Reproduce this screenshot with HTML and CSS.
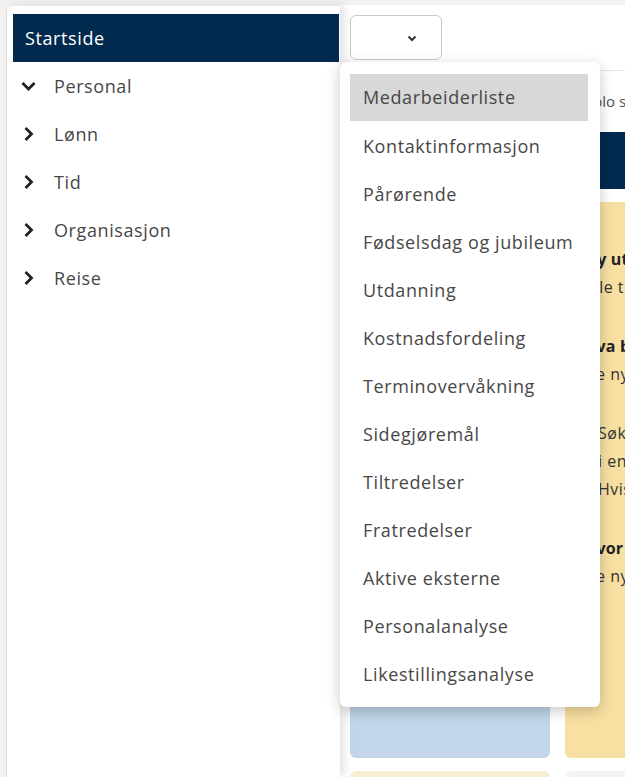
FILE: index.html
```
<!DOCTYPE html>
<html lang="no">
<head>
    <meta charset="utf-8"/>
    <title>Startside</title>
    <link rel="stylesheet" href="styles.css">
</head>
<body>
    <div class="app">
        <aside class="sidebar">
            <div class="home">Startside</div>
            <ul class="nav">
                <li class="nav-item">
                    <svg class="chev" viewBox="0 0 16 16"><path d="M1.5 5 L7.5 11 L13.5 5"/></svg>
                    <span>Personal</span>
                </li>
                <li class="nav-item">
                    <svg class="chev" viewBox="0 0 16 16"><path d="M4.5 2 L10.5 8 L4.5 14"/></svg>
                    <span>Lønn</span>
                </li>
                <li class="nav-item">
                    <svg class="chev" viewBox="0 0 16 16"><path d="M4.5 2 L10.5 8 L4.5 14"/></svg>
                    <span>Tid</span>
                </li>
                <li class="nav-item">
                    <svg class="chev" viewBox="0 0 16 16"><path d="M4.5 2 L10.5 8 L4.5 14"/></svg>
                    <span>Organisasjon</span>
                </li>
                <li class="nav-item">
                    <svg class="chev" viewBox="0 0 16 16"><path d="M4.5 2 L10.5 8 L4.5 14"/></svg>
                    <span>Reise</span>
                </li>
            </ul>
        </aside>
        <main class="main">
            <div class="toolbar">
                <button class="select">
                    <svg viewBox="0 0 12 12"><path d="M2.5 4.5 L6 8 L9.5 4.5"/></svg>
                </button>
            </div>
            <p class="info">Velg en rapport i menyen, eller et solo søk etter ansatte</p>
            <div class="banner"></div>
            <div class="cards">
                <div class="card blue">
                    <div class="big">Rapporter</div>
                </div>
                <div class="card yellow">
                    <p><b>Ny utgave av rapportene</b><br>Alle tilganger er overført</p>
                    <p><b>Hva betyr dette for deg</b><br>De nye rapportene ligger i menyen</p>
                    <p class="indent">Søk etter ansatte gjøres nå<br>i en egen rapport.<br>Hvis du mangler tilgang</p>
                    <p><b>Hvor finner jeg</b><br>De nye sidene</p>
                </div>
                <div class="card pale"></div>
                <div class="card plain"></div>
            </div>
        </main>
    </div>

    <ul class="menu">
        <li class="active">Medarbeiderliste</li>
        <li>Kontaktinformasjon</li>
        <li>Pårørende</li>
        <li>Fødselsdag og jubileum</li>
        <li>Utdanning</li>
        <li>Kostnadsfordeling</li>
        <li>Terminovervåkning</li>
        <li>Sidegjøremål</li>
        <li>Tiltredelser</li>
        <li>Fratredelser</li>
        <li>Aktive eksterne</li>
        <li>Personalanalyse</li>
        <li>Likestillingsanalyse</li>
    </ul>
</body>
</html>
```
FILE: styles.css
```
body {
    margin: 0;
    background: #f1f1f1;
    font-family: "Open Sans", Roboto, sans-serif;
    font-size: 18px;
    letter-spacing: 0.6px;
    color: #474747;
    overflow: hidden;
}
.app {
    display: flex;
    height: 772px;
    padding-top: 5px;
}
.sidebar {
    position: relative;
    z-index: 1;
    flex: 0 0 334px;
    box-sizing: border-box;
    margin-left: 6px;
    padding: 8px 1px 0 6px;
    background: #fff;
    border-left: 1px solid #dcdcdc;
    border-top: 1px solid #e8e8e8;
    border-radius: 6px 0 0 0;
    box-shadow: 5px 0 9px rgba(0, 0, 0, 0.10);
}
.home {
    height: 48px;
    line-height: 48px;
    padding: 0 12px;
    background: #022a4f;
    color: #fff;
}
.nav {
    list-style: none;
    margin: 0;
    padding: 0;
}
.nav-item {
    display: flex;
    align-items: center;
    height: 48px;
    padding-left: 8px;
}
.chev {
    width: 16px;
    height: 16px;
    margin-right: 17px;
    fill: none;
    stroke: #222;
    stroke-width: 2.8;
}
.main {
    flex: 1;
    min-width: 0;
    background: #fff;
    padding: 10px 0 0 10px;
    overflow: hidden;
    letter-spacing: 0;
}
.toolbar {
    height: 45px;
}
.select {
    display: flex;
    justify-content: flex-end;
    align-items: center;
    width: 92px;
    height: 45px;
    padding: 0 23px 0 0;
    background: #fff;
    border: 1px solid #c9c9c9;
    border-radius: 6px;
}
.select svg {
    width: 12px;
    height: 12px;
    fill: none;
    stroke: #333;
    stroke-width: 2;
}
.info {
    margin: 10px 0 0 0;
    border-top: 1px solid #e2e2e2;
    padding: 18px 0 19px 0;
    line-height: 24px;
    font-size: 15px;
    color: #555;
    white-space: nowrap;
}
.banner {
    height: 57px;
    background: #022a4f;
}
.cards {
    display: grid;
    grid-template-columns: 200px 200px;
    grid-auto-rows: 556px;
    gap: 13px 15px;
    margin-top: 13px;
}
.card {
    border-radius: 6px;
}
.blue {
    background: #c2d5ea;
}
.big {
    padding: 14px 16px;
    font-size: 24px;
    font-weight: 700;
    color: #111;
}
.yellow {
    background: #f8e0a2;
    padding: 43px 0 0 19px;
    font-size: 16px;
    letter-spacing: 0.5px;
    line-height: 28px;
    color: #333;
    white-space: nowrap;
}
.yellow p {
    margin: 0 0 31px 0;
}
.yellow .indent {
    padding-left: 14px;
}
.yellow b {
    color: #222;
    letter-spacing: 0.2px;
}
.pale {
    background: #f7edd3;
}
.plain {
    background: #f4f4f4;
}
.menu {
    position: absolute;
    left: 340px;
    top: 62px;
    z-index: 2;
    width: 260px;
    box-sizing: border-box;
    margin: 0;
    padding: 12px 12px 9px 10px;
    list-style: none;
    background: #fff;
    border-radius: 6px;
    box-shadow: 0 4px 14px rgba(0, 0, 0, 0.22);
}
.menu li {
    height: 48px;
    line-height: 48px;
    padding-left: 13px;
    white-space: nowrap;
}
.menu li.active {
    height: 47px;
    line-height: 47px;
    margin-bottom: 1px;
    background: #d8d8d8;
}
```
